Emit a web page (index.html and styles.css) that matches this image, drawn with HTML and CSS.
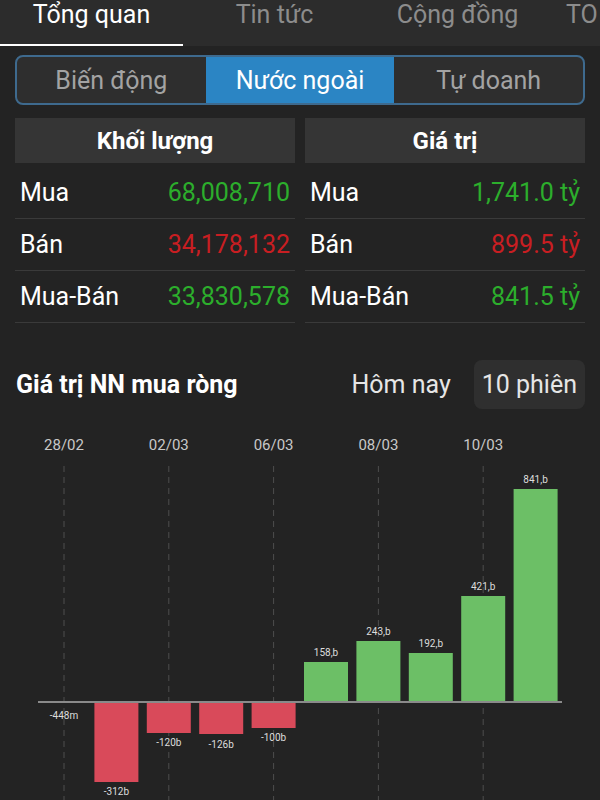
FILE: index.html
```html
<!DOCTYPE html>
<html>
	<head>
		<meta http-equiv="content-type" content="text/html; charset=utf-8" />
		<link rel="stylesheet" href="styles.css">
	</head>
	<body>
		<div class="tabs">
			<div class="tab active">Tổng quan</div>
			<div class="tab">Tin tức</div>
			<div class="tab">Cộng đồng</div>
			<div class="tab last">TO</div>
		</div>

		<div class="segment">
			<div class="seg">Biến động</div>
			<div class="seg selected">Nước ngoài</div>
			<div class="seg">Tự doanh</div>
		</div>

		<div class="summary">
			<div class="col">
				<div class="head">Khối lượng</div>
				<div class="row"><span>Mua</span><span class="up">68,008,710</span></div>
				<div class="row"><span>Bán</span><span class="down">34,178,132</span></div>
				<div class="row"><span>Mua-Bán</span><span class="up">33,830,578</span></div>
			</div>
			<div class="col">
				<div class="head">Giá trị</div>
				<div class="row"><span>Mua</span><span class="up">1,741.0 tỷ</span></div>
				<div class="row"><span>Bán</span><span class="down">899.5 tỷ</span></div>
				<div class="row"><span>Mua-Bán</span><span class="up">841.5 tỷ</span></div>
			</div>
		</div>

		<div class="section">
			<div class="title">Giá trị NN mua ròng</div>
			<div class="range">
				<div class="opt">Hôm nay</div>
				<div class="opt on">10 phiên</div>
			</div>
		</div>

		<div class="chart">
			<svg width="600" height="380" viewBox="0 0 600 380">
				<g class="grid">
					<line x1="64" y1="45" x2="64" y2="380" />
					<line x1="168.8" y1="45" x2="168.8" y2="380" />
					<line x1="273.6" y1="45" x2="273.6" y2="380" />
					<line x1="378.4" y1="45" x2="378.4" y2="380" />
					<line x1="483.2" y1="45" x2="483.2" y2="380" />
				</g>
				<g class="dates">
					<text x="64" y="29">28/02</text>
					<text x="168.8" y="29">02/03</text>
					<text x="273.6" y="29">06/03</text>
					<text x="378.4" y="29">08/03</text>
					<text x="483.2" y="29">10/03</text>
				</g>
				<g class="neg">
					<rect x="42" y="281" width="44" height="0.2" />
					<rect x="94.4" y="281" width="44" height="80" />
					<rect x="146.8" y="281" width="44" height="31" />
					<rect x="199.2" y="281" width="44" height="32" />
					<rect x="251.6" y="281" width="44" height="26" />
				</g>
				<g class="pos">
					<rect x="304" y="241" width="44" height="40" />
					<rect x="356.4" y="220" width="44" height="61" />
					<rect x="408.8" y="232" width="44" height="49" />
					<rect x="461.2" y="175" width="44" height="106" />
					<rect x="513.6" y="68" width="44" height="213" />
				</g>
				<line class="axis" x1="38" y1="281" x2="562" y2="281" />
				<g class="vals">
					<text x="64" y="298">-448m</text>
					<text x="116.4" y="374">-312b</text>
					<text x="168.8" y="325">-120b</text>
					<text x="221.2" y="327">-126b</text>
					<text x="273.6" y="320">-100b</text>
					<text x="326" y="235">158,b</text>
					<text x="378.4" y="214">243,b</text>
					<text x="430.8" y="226">192,b</text>
					<text x="483.2" y="169">421,b</text>
					<text x="535.6" y="62">841,b</text>
				</g>
			</svg>
		</div>
	</body>
</html>
```

FILE: styles.css
```css
html, body {
	margin: 0;
	padding: 0;
	background: #232323;
	font-family: Roboto, "Noto Sans", sans-serif;
	color: #ffffff;
	width: 600px;
	height: 800px;
	overflow: hidden;
}
.tabs {
	display: flex;
	height: 46px;
	background: #2c2c2c;
	overflow: hidden;
}
.tab {
	flex: 0 0 183px;
	height: 44px;
	text-align: center;
	font-size: 25px;
	line-height: 29px;
	color: #8c8c8c;
}
.tab.active {
	color: #ffffff;
	border-bottom: 2px solid #ffffff;
}
.tab.last {
	flex: 1;
	text-align: left;
	padding-left: 17px;
}
.segment {
	display: flex;
	margin: 9px 15px 0 15px;
	height: 46px;
	border: 2px solid #3e6a8e;
	border-radius: 8px;
	overflow: hidden;
	background: #2e2e2e;
}
.seg {
	flex: 1;
	display: flex;
	align-items: center;
	justify-content: center;
	font-size: 25px;
	color: #a3a3a3;
}
.seg.selected {
	background: #2b85c4;
	color: #ffffff;
}
.summary {
	display: flex;
	gap: 10px;
	margin: 13px 15px 0 15px;
}
.col {
	flex: 1;
}
.head {
	height: 45px;
	margin-bottom: 4px;
	background: #353535;
	display: flex;
	align-items: center;
	justify-content: center;
	font-size: 24px;
	font-weight: bold;
}
.row {
	display: flex;
	justify-content: space-between;
	align-items: center;
	height: 51px;
	padding: 0 5px;
	border-bottom: 1px solid #3a3a3a;
	font-size: 25px;
}
.up {
	color: #2cae2c;
}
.down {
	color: #c81e22;
}
.section {
	display: flex;
	justify-content: space-between;
	align-items: center;
	margin: 37px 15px 0 16px;
	height: 48px;
}
.title {
	font-size: 25px;
	font-weight: bold;
}
.range {
	display: flex;
	align-items: center;
	gap: 23px;
}
.opt {
	font-size: 25px;
	color: #e6e6e6;
}
.opt.on {
	background: #2f2f2f;
	border-radius: 8px;
	padding: 10px 8px;
}
.chart {
	margin-top: 13px;
}
.chart svg {
	display: block;
}
.grid line {
	stroke: #4e4e4e;
	stroke-width: 1;
	stroke-dasharray: 6 5;
}
.dates text {
	fill: #c8c8c8;
	font-size: 15px;
	text-anchor: middle;
}
.neg rect {
	fill: #d94a5a;
}
.pos rect {
	fill: #6cbf66;
}
.axis {
	stroke: #8a8a8a;
	stroke-width: 2;
}
.vals text {
	fill: #dddddd;
	font-size: 10px;
	text-anchor: middle;
}
```
